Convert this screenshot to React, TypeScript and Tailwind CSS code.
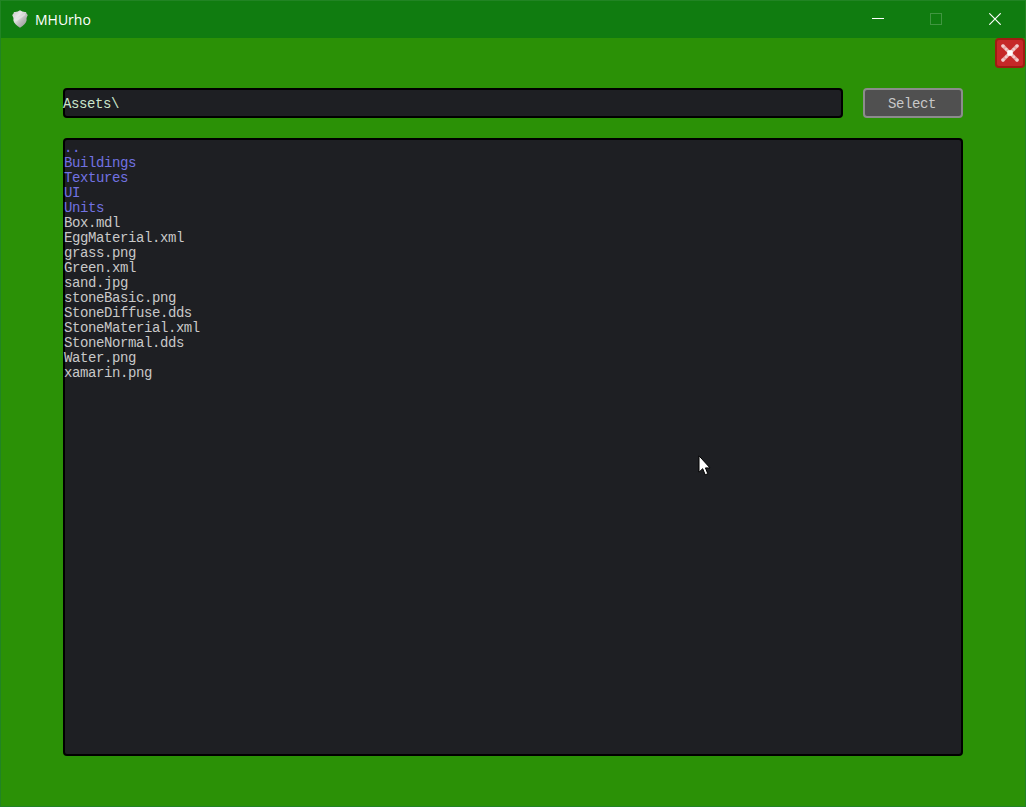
type Entry = { name: string; kind: "dir" | "file" };

const entries: Entry[] = [
  { name: "..", kind: "dir" },
  { name: "Buildings", kind: "dir" },
  { name: "Textures", kind: "dir" },
  { name: "UI", kind: "dir" },
  { name: "Units", kind: "dir" },
  { name: "Box.mdl", kind: "file" },
  { name: "EggMaterial.xml", kind: "file" },
  { name: "grass.png", kind: "file" },
  { name: "Green.xml", kind: "file" },
  { name: "sand.jpg", kind: "file" },
  { name: "stoneBasic.png", kind: "file" },
  { name: "StoneDiffuse.dds", kind: "file" },
  { name: "StoneMaterial.xml", kind: "file" },
  { name: "StoneNormal.dds", kind: "file" },
  { name: "Water.png", kind: "file" },
  { name: "xamarin.png", kind: "file" },
];

function ShieldIcon() {
  return (
    <svg width="16" height="18" viewBox="0 0 16 18">
      <defs>
        <linearGradient id="shield" x1="0" y1="0" x2="1" y2="1">
          <stop offset="0" stopColor="#c4c4c4" />
          <stop offset="0.35" stopColor="#e6e6e6" />
          <stop offset="0.6" stopColor="#bdbdbd" />
          <stop offset="1" stopColor="#8c8c8c" />
        </linearGradient>
      </defs>
      <path
        d="M8 .3 Q10.5 2.4 14 2 Q14.4 3.8 15.8 5 Q14.2 7.5 14.6 10.5 Q13.6 14.4 8 17.8 Q2.4 14.4 1.4 10.5 Q1.8 7.5 .2 5 Q1.6 3.8 2 2 Q5.5 2.4 8 .3 Z"
        fill="url(#shield)"
      />
      <path d="M3 10 L12.8 3.6 L13.2 5 L3.8 12 Z" fill="#f2f2f2" opacity=".45" />
    </svg>
  );
}

function TitleBar() {
  return (
    <header className="flex h-[37px] shrink-0 items-center bg-[#107c10] pl-[11px]">
      <div className="pb-px">
        <ShieldIcon />
      </div>
      <span className="ml-[7px] font-['Open_Sans',sans-serif] text-[14px] leading-[37px] tracking-normal text-white">
        MHUrho
      </span>
      <div className="ml-auto flex h-full items-center">
        <button className="flex h-full w-[58px] items-center justify-center pb-px" aria-label="Minimize">
          <svg width="12" height="12" shapeRendering="crispEdges">
            <path d="M0 5.5H12" stroke="#fff" />
          </svg>
        </button>
        <button className="flex h-full w-[58px] items-center justify-center pb-px" aria-label="Maximize">
          <svg width="12" height="12" shapeRendering="crispEdges">
            <rect x=".5" y=".5" width="11" height="11" fill="none" stroke="#409640" />
          </svg>
        </button>
        <button className="flex h-full w-[60px] items-center justify-center pb-px" aria-label="Close">
          <svg width="12" height="12">
            <path d="M.3 .3L11.7 11.7M11.7 .3L.3 11.7" stroke="#fff" strokeWidth="1.15" />
          </svg>
        </button>
      </div>
    </header>
  );
}

function PanelClose() {
  return (
    <button
      className="flex h-[30px] w-[30px] items-center justify-center rounded-[4px] border-2 border-[#a01c12] bg-[#c62828]"
      aria-label="Close panel"
    >
      <svg width="20" height="20" viewBox="0 0 20 20">
        <path d="M3 3L17 17M17 3L3 17" stroke="#e6a3a3" strokeWidth="3.4" strokeLinecap="round" />
        <g fill="#f3cccc">
          <rect x="1.5" y="1.5" width="3" height="3" rx=".8" />
          <rect x="15.5" y="1.5" width="3" height="3" rx=".8" />
          <rect x="1.5" y="15.5" width="3" height="3" rx=".8" />
          <rect x="15.5" y="15.5" width="3" height="3" rx=".8" />
          <rect x="5" y="5" width="2.4" height="2.4" rx=".6" />
          <rect x="12.6" y="5" width="2.4" height="2.4" rx=".6" />
          <rect x="5" y="12.6" width="2.4" height="2.4" rx=".6" />
          <rect x="12.6" y="12.6" width="2.4" height="2.4" rx=".6" />
        </g>
        <rect x="7.3" y="7.3" width="5.4" height="5.4" rx="1" fill="#fff" />
      </svg>
    </button>
  );
}

function Cursor() {
  return (
    <svg className="absolute left-[697px] top-[454px]" width="13" height="22" viewBox="0 0 13 22">
      <path
        d="M1 .8V17.2L4.7 13.7L7.2 19.8L9.8 18.7L7.4 12.9H12Z"
        fill="#fff"
        stroke="#000"
        strokeWidth="1"
      />
    </svg>
  );
}

export default function App() {
  return (
    <div className="relative flex h-[807px] w-[1026px] flex-col overflow-hidden border border-[#218424] bg-[#2b9106] font-['Liberation_Mono',monospace] text-[14px] leading-[15px] tracking-[-0.41px]">
      <TitleBar />
      <div className="flex h-[50px] shrink-0 justify-end">
        <PanelClose />
      </div>
      <main className="flex flex-col gap-5 pl-[62px]">
        <div className="flex gap-5">
          <div className="flex h-[30px] w-[780px] items-center rounded-[4px] border-2 border-black bg-[#1e1f23] pt-[2px] text-[#cbe6cb]">
            <span className="-ml-[2px]">Assets\</span>
          </div>
          <button className="flex h-[30px] w-[100px] items-center justify-center rounded-[4px] border-2 border-[#8c8c8c] bg-[#505050] pt-[2px] text-[#c8c8c8]">
            <span className="pr-[2px]">Select</span>
          </button>
        </div>
        <ul className="h-[618px] w-[900px] rounded-[4px] border-2 border-black bg-[#1e1f23] pt-px">
          {entries.map((e) => (
            <li
              key={e.name}
              className={e.kind === "dir" ? "-ml-px h-[15px] text-[#7272e2]" : "-ml-px h-[15px] text-[#c8c8c8]"}
            >
              {e.name}
            </li>
          ))}
        </ul>
      </main>
      <Cursor />
    </div>
  );
}
